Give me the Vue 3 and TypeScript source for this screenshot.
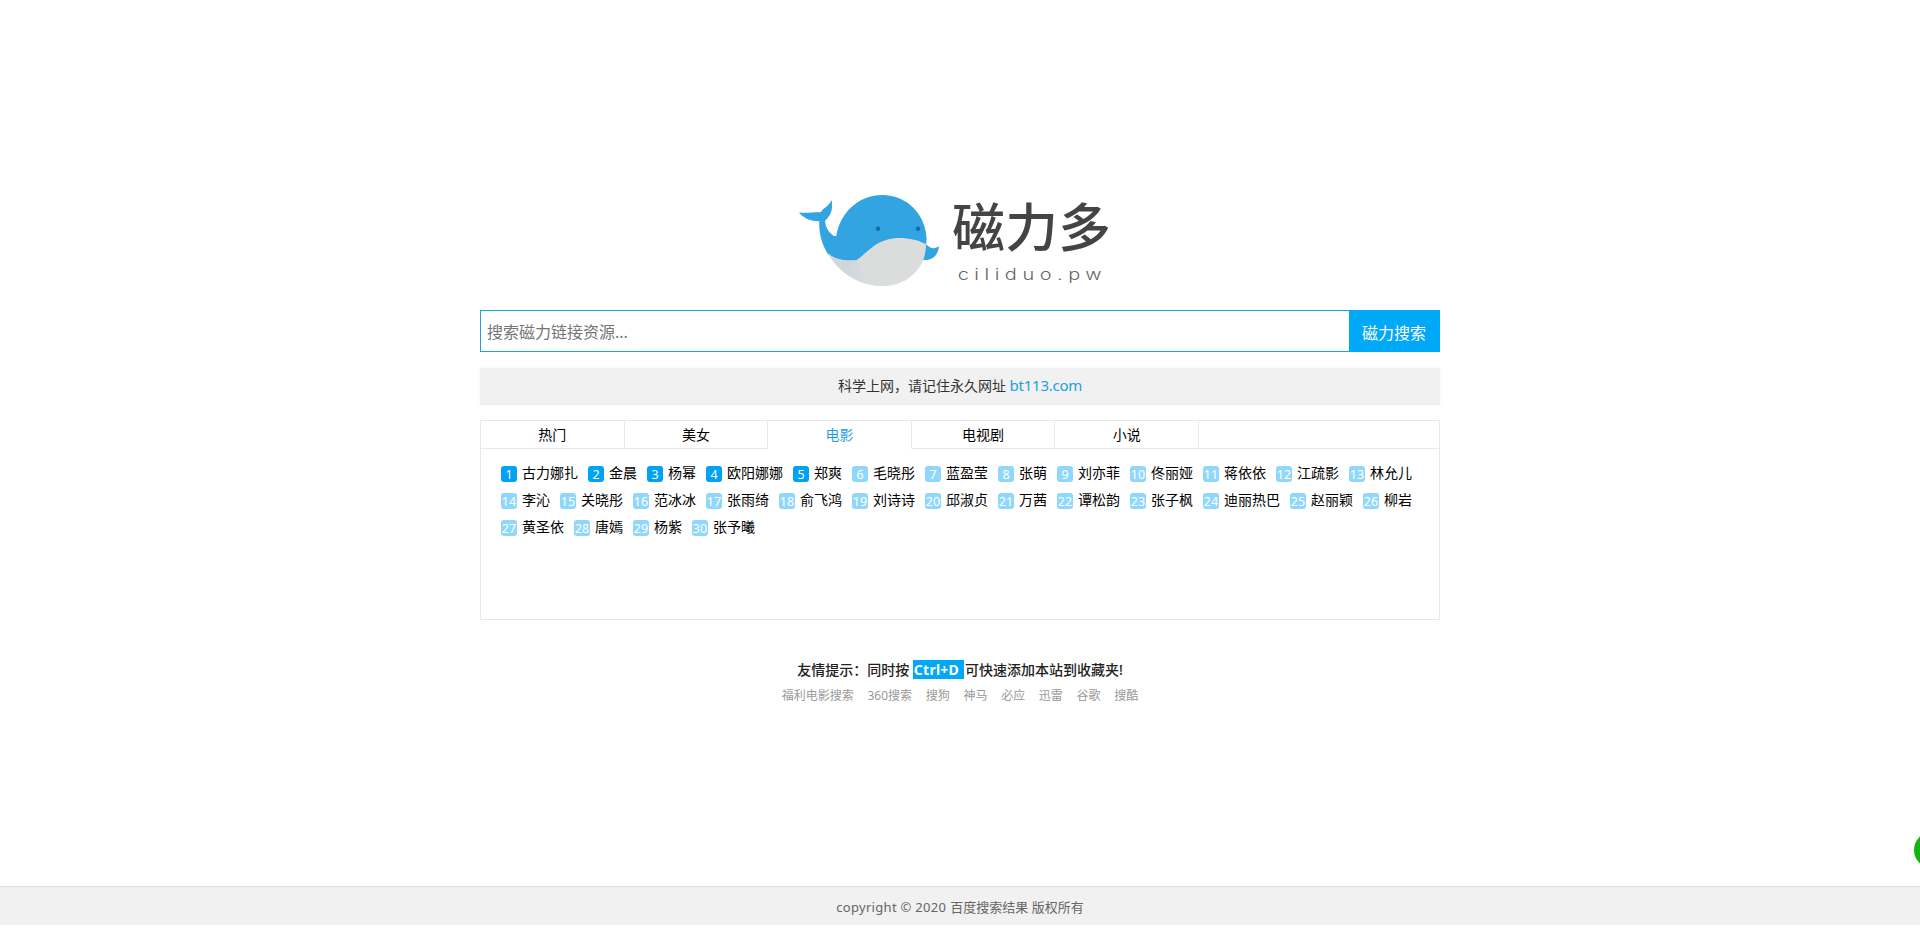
<script setup lang="ts">
import { ref } from 'vue'

const keyword = ref('')
const tabs = ['热门', '美女', '电影', '电视剧', '小说']
const active = ref(2)
const names = [
  '古力娜扎', '金晨', '杨幂', '欧阳娜娜', '郑爽', '毛晓彤', '蓝盈莹', '张萌', '刘亦菲', '佟丽娅',
  '蒋依依', '江疏影', '林允儿', '李沁', '关晓彤', '范冰冰', '张雨绮', '俞飞鸿', '刘诗诗', '邱淑贞',
  '万茜', '谭松韵', '张子枫', '迪丽热巴', '赵丽颖', '柳岩', '黄圣依', '唐嫣', '杨紫', '张予曦',
]
const links = ['福利电影搜索', '360搜索', '搜狗', '神马', '必应', '迅雷', '谷歌', '搜酷']
</script>

<template>
  <div class="page" lang="zh-CN">
    <main class="main">
      <a class="logo" aria-label="磁力多">
        <svg width="350" height="120" viewBox="0 0 1050 360">
          <defs>
            <linearGradient id="shade" x1="0" y1="0" x2="1" y2="0.35">
              <stop offset="0.45" stop-color="#d0d6dc" />
              <stop offset="1" stop-color="#dbdddd" />
            </linearGradient>
          </defs>
          <path class="blue" d="M57 97 C80 101 103 96 122 97 C130 84 148 77 155 60 C160 88 152 107 135 122 C136 141 147 159 162 168 L169 168 C178 105 230 45 307 45 C382 45 438 105 440 178 L438 193 C453 209 466 206 477 199 C475 224 459 242 430 240 L300 265 L229 243 C196 246 163 241 143 221 C126 193 116 160 118 124 C92 124 68 114 57 97 Z" />
          <path class="belly" d="M143 219 C163 239 196 244 229 241 C264 216 288 181 342 175 C378 172 416 180 438 193 C438 212 434 226 430 240 C411 285 367 317 313 318 C236 318 180 279 143 219 Z" />
          <path fill="url(#shade)" d="M143 219 C163 239 196 244 229 241 C241 275 268 307 300 318 C230 315 177 276 143 219 Z" />
          <circle class="eye" cx="294" cy="146" r="6.5" />
          <circle class="eye" cx="414" cy="146" r="6.5" />
          <text class="brand" x="517" y="200" textLength="476">磁力多</text>
          <text class="domain" transform="translate(533 300) scale(1.3 1)" textLength="332">ciliduo.pw</text>
        </svg>
      </a>

      <form class="search" @submit.prevent>
        <input v-model="keyword" class="field" type="text" placeholder="搜索磁力链接资源..." />
        <button class="submit" type="submit">磁力搜索</button>
      </form>

      <p class="notice">科学上网，请记住永久网址 <a class="site">bt113.com</a></p>

      <section class="panel">
        <nav class="tabs">
          <a v-for="(t, i) in tabs" :key="t" class="tab" :class="{ on: i === active }" @click="active = i">{{ t }}</a>
          <span class="rest"></span>
        </nav>
        <ul class="list">
          <li v-for="(n, i) in names" :key="n" class="item">
            <span class="num" :class="{ top: i < 5 }">{{ i + 1 }}</span><span class="name">{{ n }}</span>
          </li>
        </ul>
      </section>

      <p class="tip">友情提示：同时按 <span class="key">Ctrl+D </span><span class="after">可快速添加本站到收藏夹!</span></p>
      <div class="links"><a v-for="l in links" :key="l">{{ l }}</a></div>
    </main>
    <footer class="footer"><span class="latin">copyright © 2020</span><span>百度搜索结果 版权所有</span></footer>
    <span class="bubble"></span>
  </div>
</template>

<style>
body { margin: 0; }
</style>

<style scoped>
.page {
  position: relative;
  display: flex;
  flex-direction: column;
  height: 936px;
  box-sizing: border-box;
  padding-bottom: 11px;
  overflow: hidden;
  background: #fff;
  color: #333;
  font-family: "Noto Sans", "Noto Sans CJK SC", sans-serif;
  font-size: 14px;
}
.main { width: 960px; margin: 0 auto; padding-top: 180px; flex: 1; }
.logo { display: block; height: 130px; padding-left: 300px; }
.logo svg { display: block; }
.blue { fill: #31a4e1; }
.belly { fill: #dbdddd; }
.eye { fill: #176aa0; }
.brand { font: 500 158px "Noto Sans CJK SC", sans-serif; fill: #444; }
.domain { font: 300 46px "Inter", sans-serif; fill: #666; }
.search { display: flex; height: 42px; }
.field {
  flex: 1;
  min-width: 0;
  box-sizing: border-box;
  border: 1px solid #1ea4d6;
  border-right: 0;
  padding: 2px 7px 0 6px;
  outline: 0;
  font: 16px "Noto Sans", "Noto Sans CJK SC", sans-serif;
}
.field::placeholder { color: #757575; opacity: 1; }
.submit {
  width: 91px;
  border: 0;
  padding: 2px 1px 0 0;
  background: #00a8f8;
  color: #fff;
  font: 16px "Noto Sans CJK SC", sans-serif;
}
.notice {
  margin: 16px 0 15px;
  height: 37px;
  line-height: 34px;
  text-align: center;
  background: #f1f1f1;
  box-shadow: 0 0 2px #f1f1f1;
}
.site { color: #1b9fe0; font-size: 15px; letter-spacing: -0.25px; }
.panel { height: 200px; box-sizing: border-box; border: 1px solid #e8e8e8; }
.tabs { display: flex; height: 28px; line-height: 27px; color: #000; }
.tab, .rest { box-sizing: border-box; border-bottom: 1px solid #e8e8e8; }
.tab { width: 143.6px; border-right: 1px solid #e8e8e8; text-align: center; }
.rest { flex: 1; }
.tab.on { color: #1b9fe0; border-bottom-color: transparent; }
.list {
  display: flex;
  flex-wrap: wrap;
  column-gap: 10px;
  margin: 0;
  padding: 11px 20px;
  list-style: none;
  color: #000;
}
.item { display: flex; align-items: center; height: 27px; }
.name { line-height: 20px; padding-bottom: 1px; }
.num {
  width: 16px;
  height: 16px;
  margin-right: 5px;
  border-radius: 3px;
  background: #8fd8fb;
  color: #fff;
  font-size: 12.5px;
  line-height: 17px;
  text-align: center;
}
.num.top { background: #00a2f5; }
.tip { margin: 40px 0 0; height: 20px; line-height: 19px; text-align: center; font-weight: 500; color: #222; }
.key { display: inline-block; padding: 0 1px; background: #00a8f8; color: #fff; font-weight: 700; letter-spacing: 0.25px; white-space: pre; }
.after { margin-left: 1px; }
.links { display: flex; justify-content: center; gap: 13.7px; margin-top: 7px; line-height: 18px; font-size: 12px; color: #999; }
.footer {
  display: flex;
  justify-content: center;
  gap: 4px;
  height: 39px;
  box-sizing: border-box;
  border-top: 1px solid #ddd;
  background: #f1f1f1;
  color: #666;
  font-size: 13px;
  line-height: 40px;
}
.latin { letter-spacing: 0.3px; }
.bubble {
  position: absolute;
  left: 1914px;
  top: 832px;
  width: 36px;
  height: 36px;
  border-radius: 50%;
  background: #11b411;
}
</style>
